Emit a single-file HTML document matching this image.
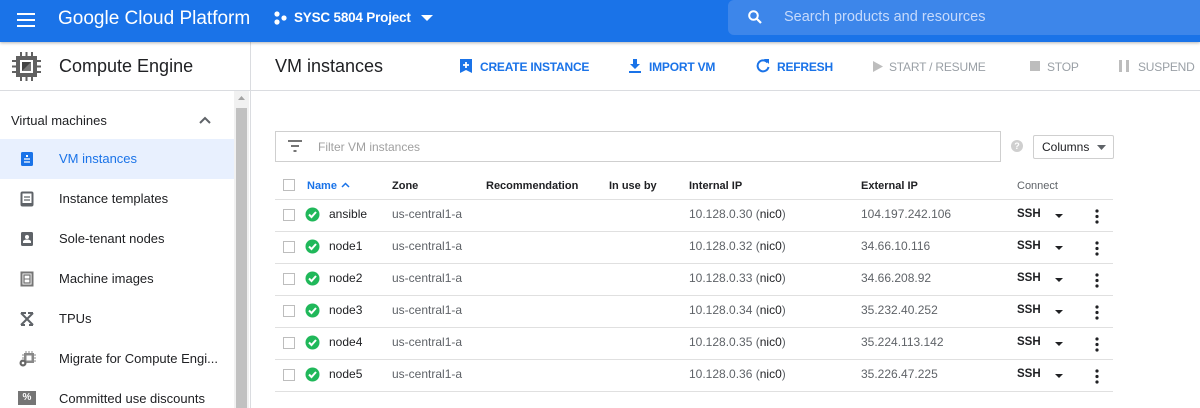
<!DOCTYPE html>
<html><head><meta charset="utf-8"><style>
*{margin:0;padding:0;box-sizing:border-box}
body{width:1200px;height:408px;overflow:hidden;background:#fff;font-family:"Liberation Sans",Arial,sans-serif;position:relative;color:#202124}
.a{position:absolute;white-space:nowrap}
#top{position:absolute;left:0;top:0;width:1200px;height:42px;background:#1a73e8;box-shadow:0 1px 3px rgba(0,0,0,.3);z-index:2}
.t{font-size:12px}
.g{color:#5f6368}
.nav{font-size:13px;color:#202124}
.btn{font-size:12px;font-weight:bold;color:#1a73e8;top:60px;letter-spacing:-0.2px}
.dis{color:#9aa0a6}
.hl{position:absolute;left:275px;width:838px;height:1px;background:#e0e0e0}
.cb{position:absolute;left:283px;width:12px;height:12px;border:1px solid #bdbdbd;background:#fff}
</style></head><body>
<div id="top">
 <svg class="a" style="left:16px;top:12px" width="20" height="16"><rect x="1" y="1" width="18" height="2" fill="#fff"/><rect x="1" y="7" width="18" height="2" fill="#fff"/><rect x="1" y="13" width="18" height="2" fill="#fff"/></svg>
 <div class="a" style="left:58px;top:8px;font-size:19px;color:#fff">Google Cloud Platform</div>
 <svg class="a" style="left:273px;top:10px" width="16" height="16"><circle cx="4" cy="4" r="2.6" fill="#fff"/><circle cx="4" cy="12" r="2.6" fill="#fff"/><circle cx="11" cy="8" r="2.6" fill="#fff"/></svg>
 <div class="a" style="left:294px;top:10px;font-size:13.5px;font-weight:bold;color:#fff;letter-spacing:-0.2px">SYSC 5804 Project</div>
 <svg class="a" style="left:420px;top:14px" width="14" height="8"><path d="M1 1h12L7 7z" fill="#fff"/></svg>
 <div class="a" style="left:728px;top:0;width:480px;height:35px;background:#3d86ea;border-radius:6px"></div>
 <svg class="a" style="left:747px;top:9px" width="16" height="16"><circle cx="6.5" cy="6.5" r="4.3" fill="none" stroke="#fff" stroke-width="2"/><path d="M9.5 9.5l4.5 4.5" stroke="#fff" stroke-width="2.2"/></svg>
 <div class="a" style="left:784px;top:9px;font-size:14.5px;color:#c6dafc">Search products and resources</div>
</div>
<div class="a" style="left:0;top:90px;width:1200px;height:1px;background:#dadce0"></div>
<div class="a" style="left:250px;top:42px;width:1px;height:366px;background:#dadce0"></div>
<svg class="a" style="left:11px;top:52px" width="32" height="30"><rect x="5" y="4" width="21" height="21" fill="#616161"/><rect x="9" y="8" width="13" height="13" fill="#fff"/><rect x="11" y="10" width="9" height="9" fill="#444"/><path d="M11 19L20 10v9z" fill="#777"/><g fill="#616161"><rect x="9" y="0" width="2" height="4"/><rect x="14.5" y="0" width="2" height="4"/><rect x="20" y="0" width="2" height="4"/><rect x="9" y="25" width="2" height="4"/><rect x="14.5" y="25" width="2" height="4"/><rect x="20" y="25" width="2" height="4"/><rect x="1" y="8" width="4" height="2"/><rect x="1" y="13.5" width="4" height="2"/><rect x="1" y="19" width="4" height="2"/><rect x="26" y="8" width="4" height="2"/><rect x="26" y="13.5" width="4" height="2"/><rect x="26" y="19" width="4" height="2"/></g></svg>
<div class="a" style="left:59px;top:56px;font-size:18px">Compute Engine</div>
<div class="a" style="left:275px;top:56px;font-size:18px">VM instances</div>
<svg class="a" style="left:459px;top:58px" width="14" height="16"><path d="M1 1h12v14l-6-3-6 3z" fill="#1a73e8"/><path d="M7 4v6M4 7h6" stroke="#fff" stroke-width="1.8"/></svg>
<div class="a btn" style="left:480px">CREATE INSTANCE</div>
<svg class="a" style="left:628px;top:58px" width="14" height="16"><path d="M5 1h4v5h3l-5 5-5-5h3z" fill="#1a73e8"/><rect x="1" y="13" width="12" height="2" fill="#1a73e8"/></svg>
<div class="a btn" style="left:649px">IMPORT VM</div>
<svg class="a" style="left:756px;top:58px" width="14" height="16"><path d="M11.5 4.5A5.5 5.5 0 1 0 12.5 9" fill="none" stroke="#1a73e8" stroke-width="2"/><path d="M8 1h5v5z" fill="#1a73e8"/></svg>
<div class="a btn" style="left:777px">REFRESH</div>
<svg class="a" style="left:872px;top:60px" width="12" height="13"><path d="M1 1l10 5.5L1 12z" fill="#bdbdbd"/></svg>
<div class="a btn dis" style="left:889px;font-weight:normal">START / RESUME</div>
<div class="a" style="left:1030px;top:61px;width:10px;height:10px;background:#bdbdbd"></div>
<div class="a btn dis" style="left:1047px;font-weight:normal">STOP</div>
<div class="a" style="left:1119px;top:60px;width:3px;height:12px;background:#bdbdbd"></div>
<div class="a" style="left:1126px;top:60px;width:3px;height:12px;background:#bdbdbd"></div>
<div class="a btn dis" style="left:1138px;font-weight:normal">SUSPEND</div>
<div class="a" style="left:234px;top:91px;width:15px;height:317px;background:#f1f1f1"></div>
<div class="a" style="left:236px;top:108px;width:11px;height:300px;background:#c1c1c1"></div>
<svg class="a" style="left:237px;top:95px" width="9" height="6"><path d="M1 5l3.5-4 3.5 4z" fill="#a3a3a3"/></svg>
<div class="a nav" style="left:11px;top:113px">Virtual machines</div>
<svg class="a" style="left:198px;top:116px" width="14" height="9"><path d="M2 7l5-5 5 5" fill="none" stroke="#5f6368" stroke-width="2"/></svg>
<div class="a" style="left:0;top:139px;width:234px;height:40px;background:#e8f0fe"></div>
<svg class="a" style="left:20px;top:151px" width="14" height="16"><rect x="1" y="1" width="12" height="14" rx="1.5" fill="#1a73e8"/><path d="M4 8h6M4 11h6" stroke="#fff" stroke-width="1.3"/><rect x="6" y="4" width="2" height="2" fill="#fff"/></svg>
<div class="a nav" style="left:59px;top:151px;color:#1a73e8">VM instances</div>
<svg class="a" style="left:20px;top:191px" width="14" height="16"><rect x="1.5" y="1.5" width="11" height="13" rx="1" fill="none" stroke="#5f6368" stroke-width="2"/><path d="M4 6h6M4 9h6" stroke="#5f6368" stroke-width="1.3"/><rect x="1" y="12" width="12" height="3" fill="#5f6368"/></svg>
<div class="a nav" style="left:59px;top:191px">Instance templates</div>
<svg class="a" style="left:20px;top:231px" width="14" height="16"><rect x="1" y="1" width="12" height="14" rx="1.5" fill="#5f6368"/><circle cx="7" cy="6" r="2" fill="#fff"/><path d="M3 12h8v-1.5a4 2 0 0 0-8 0z" fill="#fff"/></svg>
<div class="a nav" style="left:59px;top:231px">Sole-tenant nodes</div>
<svg class="a" style="left:20px;top:271px" width="14" height="16"><rect x="1.5" y="1.5" width="11" height="13" fill="none" stroke="#757575" stroke-width="2"/><rect x="4" y="4" width="6" height="8" fill="none" stroke="#757575" stroke-width="1.3"/><path d="M4 8h6" stroke="#757575"/></svg>
<div class="a nav" style="left:59px;top:271px">Machine images</div>
<svg class="a" style="left:19px;top:311px" width="16" height="16"><path d="M2 2l12 12M14 2L2 14M2 2h5M9 2h5M2 14h4M10 14h4" stroke="#5f6368" stroke-width="2" fill="none"/></svg>
<div class="a nav" style="left:59px;top:311px">TPUs</div>
<svg class="a" style="left:19px;top:351px" width="17" height="16"><rect x="5" y="2" width="10" height="10" fill="#888"/><rect x="7.5" y="4.5" width="5" height="5" fill="#fff"/><path d="M7 0v2M10 0v2M13 0v2M15 4h2M15 7h2M15 10h2M3 4h2M3 7h2" stroke="#888"/><circle cx="4" cy="12" r="3.5" fill="#666"/><circle cx="4" cy="12" r="1.3" fill="#fff"/></svg>
<div class="a nav" style="left:59px;top:351px">Migrate for Compute Engi...</div>
<div class="a" style="left:18px;top:391px;width:18px;height:14px;background:#757575;color:#fff;font-size:10px;font-weight:bold;text-align:center;line-height:14px">%</div>
<div class="a nav" style="left:59px;top:391px">Committed use discounts</div>
<div class="a" style="left:275px;top:131px;width:726px;height:31px;border:1px solid #cfcfcf"></div>
<svg class="a" style="left:288px;top:140px" width="14" height="12"><path d="M0 1h14M3 6h8M5.5 11h3" stroke="#757575" stroke-width="2"/></svg>
<div class="a t" style="left:318px;top:140px;color:#a0a0a0">Filter VM instances</div>
<div class="a" style="left:1011px;top:140px;width:12px;height:12px;border-radius:50%;background:#cfcfcf;color:#fff;font-size:9px;font-weight:bold;text-align:center;line-height:12px">?</div>
<div class="a" style="left:1033px;top:135px;width:81px;height:24px;border:1px solid #cfcfcf;border-radius:2px"></div>
<div class="a t" style="left:1042px;top:140px;color:#202124">Columns</div>
<svg class="a" style="left:1097px;top:145px" width="9" height="5"><path d="M0 0h9L4.5 5z" fill="#5f6368"/></svg>
<div class="cb" style="top:179px"></div>
<div class="a t" style="left:307px;top:180px;color:#1a73e8;font-weight:bold;font-size:11px">Name</div>
<svg class="a" style="left:341px;top:182px" width="9" height="6"><path d="M1 5l3.5-3.5L8 5" fill="none" stroke="#1a73e8" stroke-width="1.5"/></svg>
<div class="a t" style="left:392px;top:180px;font-size:11px;font-weight:bold">Zone</div>
<div class="a t" style="left:486px;top:180px;font-size:11px;font-weight:bold">Recommendation</div>
<div class="a t" style="left:609px;top:180px;font-size:11px;font-weight:bold">In use by</div>
<div class="a t" style="left:689px;top:180px;font-size:11px;font-weight:bold">Internal IP</div>
<div class="a t" style="left:861px;top:180px;font-size:11px;font-weight:bold">External IP</div>
<div class="a t g" style="left:1017px;top:180px;font-size:11px">Connect</div>
<div class="hl" style="top:199px"></div>
<div id="rows"></div>
<script>
var d=[["ansible","10.128.0.30","104.197.242.106"],["node1","10.128.0.32","34.66.10.116"],["node2","10.128.0.33","34.66.208.92"],["node3","10.128.0.34","35.232.40.252"],["node4","10.128.0.35","35.224.113.142"],["node5","10.128.0.36","35.226.47.225"]];
var h="";
d.forEach(function(r,i){var y=200+i*32,ty=y+7;
h+='<div class="cb" style="top:'+(y+9)+'px"></div>';
h+='<svg class="a" style="left:305px;top:'+(y+7)+'px" width="15" height="15"><circle cx="7.5" cy="7.5" r="7" fill="#20b85a"/><path d="M4 7.5l2.5 2.5 4.5-5" fill="none" stroke="#fff" stroke-width="2"/></svg>';
h+='<div class="a t" style="left:329px;top:'+ty+'px">'+r[0]+'</div>';
h+='<div class="a t g" style="left:392px;top:'+ty+'px">us-central1-a</div>';
h+='<div class="a t g" style="left:689px;top:'+ty+'px">'+r[1]+' (<span style="color:#202124">nic0</span>)</div>';
h+='<div class="a t g" style="left:861px;top:'+ty+'px">'+r[2]+'</div>';
h+='<div class="a t" style="left:1017px;top:'+(ty+1)+'px;font-weight:bold;font-size:11.5px">SSH</div>';
h+='<svg class="a" style="left:1055px;top:'+(y+14)+'px" width="8" height="4"><path d="M0 0h8L4 4z" fill="#202124"/></svg>';
h+='<svg class="a" style="left:1095px;top:'+(y+9)+'px" width="4" height="15"><circle cx="2" cy="2" r="1.6" fill="#202124"/><circle cx="2" cy="7.5" r="1.6" fill="#202124"/><circle cx="2" cy="13" r="1.6" fill="#202124"/></svg>';
h+='<div class="hl" style="top:'+(y+31)+'px"></div>';});
document.getElementById("rows").innerHTML=h;
</script>
</body></html>
